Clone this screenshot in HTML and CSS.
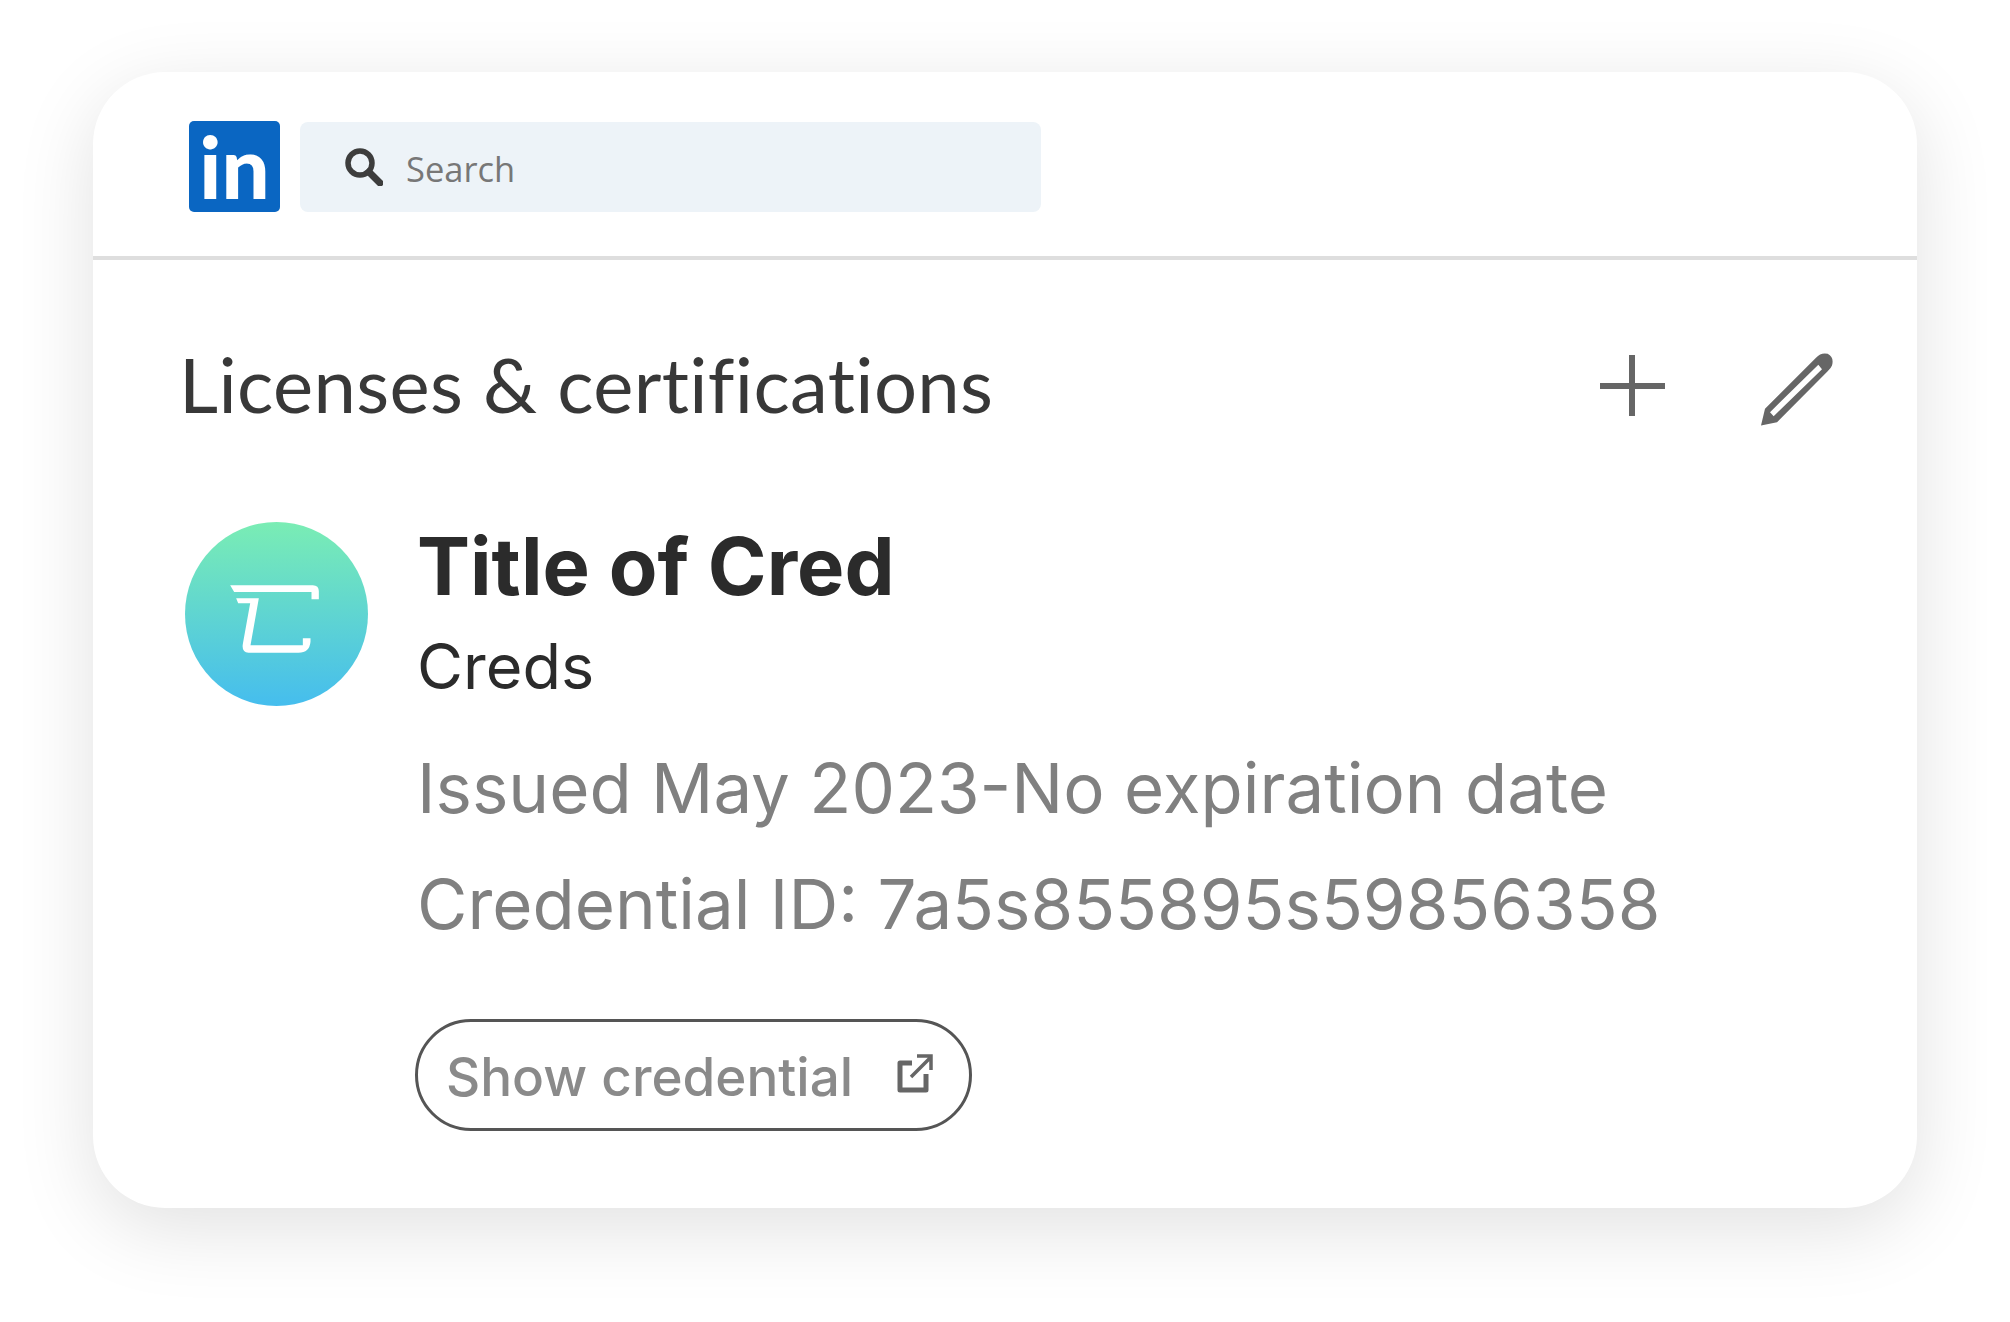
FILE: index.html
```html
<!DOCTYPE html>
<html lang="en">
<head>
  <meta charset="UTF-8" />
  <title>Licenses &amp; certifications</title>
  <link rel="stylesheet" href="styles.css">
</head>
<body>

  <div class="card">
    <div class="topbar">
      <div class="logo">in</div>
      <div class="search">
        <svg class="search-icon" viewBox="0 0 38 38"><circle cx="15" cy="15" r="12" fill="none" stroke="#3d3d3d" stroke-width="5.5"/><path d="M24 24 L35 35" stroke="#3d3d3d" stroke-width="7" stroke-linecap="round"/></svg>
        <span>Search</span>
      </div>
    </div>

    <div class="content">
      <div class="section-head">
        <h2>Licenses &amp; certifications</h2>
        <div class="actions">
          <svg class="plus" viewBox="0 0 65 61"><path d="M0 31 H65 M32 0 V61" stroke="#666" stroke-width="6"/></svg>
          <svg class="pencil" viewBox="780 158 216 218"><path fill="#666" fill-rule="evenodd" d="M780 375 L792 325 L945 172 Q960 155 980 160 Q1000 170 993 195 Q990 203 980 212 L828 365 Z M807 335 L818 347 L963 206 L952 193 Z"/></svg>
        </div>
      </div>

      <div class="cred">
        <div class="avatar">
          <svg viewBox="76 66 546 552"><path fill="#fff" d="M210 256 H458 Q476 256 476 274 V298 H454 V276 H222 Z M228 295 H296 L271 436 H428 V415 H451 V425 Q448 458 415 458 H265 Q244 458 248 432 L270 310 H234 Z"/></svg>
        </div>
        <div class="info">
          <h3>Title of Cred</h3>
          <div class="issuer">Creds</div>
          <div class="meta issued">Issued May 2023-No expiration date</div>
          <div class="meta">Credential ID: 7a5s855895s59856358</div>
          <div class="show-btn">
            <span>Show credential</span>
            <svg class="ext" viewBox="0 0 36 39"><path d="M15 9 H3 V36 H29 V20" fill="none" stroke="#666" stroke-width="5" stroke-linejoin="round"/><path d="M14 23 L33 4 M20 2 H34 V16" fill="none" stroke="#666" stroke-width="3.5"/></svg>
          </div>
        </div>
      </div>
    </div>
  </div>

</body>
</html>
```

FILE: styles.css
```css
body {
  margin: 0;
  background: #fff;
  padding: 72px 93px 0;
  height: 1322px;
  box-sizing: border-box;
  overflow: hidden;
  font-family: Inter, "Liberation Sans", sans-serif;
}

.card {
  width: 1824px;
  height: 1136px;
  background: #fff;
  border-radius: 72px;
  box-shadow: 0 20px 80px rgba(0, 0, 0, 0.12);
}

.topbar {
  display: flex;
  align-items: flex-start;
  gap: 20px;
  height: 188px;
  padding: 49px 0 0 96px;
  box-sizing: border-box;
  border-bottom: 4px solid #dedede;
}

.logo {
  width: 91px;
  height: 91px;
  background: #0a66c2;
  border-radius: 5px;
  color: #fff;
  font-family: Lato, sans-serif;
  font-weight: 900;
  font-size: 85px;
  line-height: 90px;
  text-align: center;
}

.search {
  width: 741px;
  height: 90px;
  margin-top: 1px;
  background: #edf3f8;
  border-radius: 8px;
  display: flex;
  align-items: center;
  padding-left: 45px;
  box-sizing: border-box;
  color: #777;
  font-family: "Open Sans", sans-serif;
  font-size: 34.5px;
}

.search span {
  padding-top: 2px;
}

.search-icon {
  width: 38px;
  height: 38px;
  margin-right: 23px;
}

.content {
  padding: 77px 84px 0 92px;
}

.section-head {
  display: flex;
  justify-content: space-between;
  align-items: center;
  height: 96px;
}

h2 {
  margin: -4px 0 0 -6px;
  font-family: Lato, sans-serif;
  font-weight: 400;
  font-size: 76px;
  letter-spacing: 0.35px;
  color: #383838;
}

.actions {
  display: flex;
  align-items: center;
  gap: 96px;
}

.plus {
  width: 65px;
  height: 61px;
}

.pencil {
  width: 72px;
  height: 73px;
  margin-top: 8px;
}

.cred {
  display: flex;
  gap: 49px;
  margin-top: 89px;
}

.avatar {
  width: 183px;
  height: 184px;
  border-radius: 50%;
  background: linear-gradient(180deg, #7aedb4, #45bdee);
  flex-shrink: 0;
}

.avatar svg {
  display: block;
  width: 100%;
  height: 100%;
}

h3 {
  margin: -3px 0 0;
  font-size: 79.5px;
  line-height: 94px;
  font-weight: 700;
  color: #2b2b2b;
}

.issuer {
  font-size: 63px;
  line-height: 72px;
  margin-top: 17px;
  color: #2b2b2b;
}

.meta {
  font-size: 69px;
  line-height: 80px;
  color: #808080;
  margin-top: 36px;
}

.meta.issued {
  margin-top: 46px;
}

.show-btn {
  display: flex;
  align-items: center;
  justify-content: space-between;
  width: 557px;
  height: 112px;
  margin-top: 75px;
  margin-left: -2px;
  padding: 0 36px 0 28px;
  box-sizing: border-box;
  border: 3px solid #555;
  border-radius: 56px;
  font-size: 53px;
  font-weight: 500;
  color: #8a8a8a;
}

.show-btn span {
  padding-top: 4px;
}

.ext {
  width: 36px;
  height: 39px;
  margin-top: -4px;
}
```
